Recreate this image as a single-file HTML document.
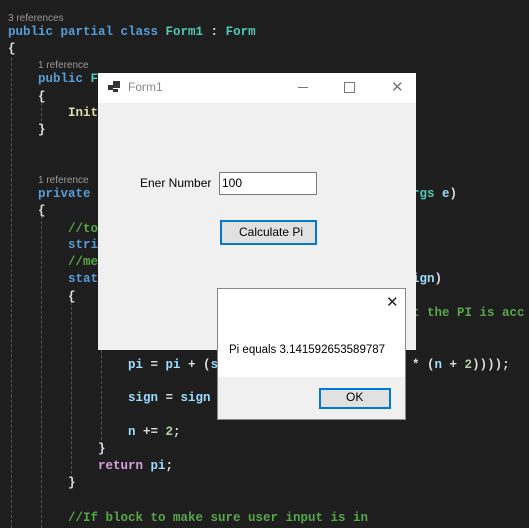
<!DOCTYPE html>
<html><head><style>
body{margin:0;width:529px;height:527px;background:#1e1e1e;position:relative;overflow:hidden;font-family:"Liberation Mono",monospace;}
.l{position:absolute;font-size:12.5px;white-space:pre;line-height:16px;font-weight:bold;color:#9cdcfe}
.c{position:absolute;font-family:"Liberation Sans",sans-serif;font-size:10px;color:#999;white-space:pre}
.k{color:#569cd6}.t{color:#4ec9b0}.g{color:#57a64a}.p{color:#d8a0df}.w{color:#dcdcdc}.m{color:#dcdcaa}.n{color:#b5cea8}
.guide{position:absolute;width:0;border-left:1px dashed #555;}
.s{font-family:"Liberation Sans",sans-serif;font-size:12px;color:#000;position:absolute;white-space:pre}
</style></head><body>
<div class="guide" style="left:11px;top:58px;height:470px"></div>
<div class="guide" style="left:41px;top:92px;height:40px"></div>
<div class="guide" style="left:41px;top:206px;height:322px"></div>
<div class="guide" style="left:71px;top:292px;height:192px"></div>
<div class="guide" style="left:101px;top:340px;height:110px"></div>

<div class="c" style="left:8px;top:13px">3 references</div>
<div class="l" style="left:8px;top:24px"><span class="k">public partial class </span><span class="t">Form1</span><span class="w"> : </span><span class="t">Form</span></div>
<div class="l w" style="left:8px;top:41px">{</div>
<div class="c" style="left:38px;top:60px">1 reference</div>
<div class="l" style="left:38px;top:71px"><span class="k">public </span><span class="t">F</span></div>
<div class="l w" style="left:38px;top:89px">{</div>
<div class="l m" style="left:68px;top:105px">Init</div>
<div class="l w" style="left:38px;top:122px">}</div>
<div class="c" style="left:38px;top:175px">1 reference</div>
<div class="l" style="left:38px;top:186px"><span class="k">private</span></div>
<div class="l" style="left:412px;top:186px"><span class="t">rgs</span> e<span class="w">)</span></div>
<div class="l w" style="left:38px;top:203px">{</div>
<div class="l g" style="left:68px;top:221px">//to</div>
<div class="l k" style="left:68px;top:237px">stri</div>
<div class="l g" style="left:68px;top:254px">//me</div>
<div class="l k" style="left:68px;top:271px">stat</div>
<div class="l" style="left:412px;top:271px">ign<span class="w">)</span></div>
<div class="l w" style="left:68px;top:289px">{</div>
<div class="l g" style="left:412px;top:305px">t the PI is acc</div>
<div class="l" style="left:128px;top:357px">pi <span class="w">=</span> pi <span class="w">+ (</span>s</div>
<div class="l" style="left:412px;top:357px"><span class="w">* (</span>n <span class="w">+ </span><span class="n">2</span><span class="w">))));</span></div>
<div class="l" style="left:128px;top:390px">sign <span class="w">=</span> sign</div>
<div class="l" style="left:128px;top:424px">n <span class="w">+= </span><span class="n">2</span><span class="w">;</span></div>
<div class="l w" style="left:98px;top:441px">}</div>
<div class="l" style="left:98px;top:458px"><span class="p">return</span> pi<span class="w">;</span></div>
<div class="l w" style="left:68px;top:475px">}</div>
<div class="l g" style="left:68px;top:510px">//If block to make sure user input is in</div>

<!-- Form1 -->
<div style="position:absolute;left:98px;top:73px;width:318px;height:277px;background:#f0f0f0;">
 <div style="position:absolute;left:0;top:0;width:318px;height:30px;background:#fff"></div>
 <div style="position:absolute;left:10px;top:12px;width:5px;height:5px;background:#333"></div>
 <div style="position:absolute;left:15px;top:8px;width:7px;height:7px;background:#333"></div>
 <div style="position:absolute;left:15px;top:16px;width:5px;height:3px;background:#333"></div>
 <div class="s" style="left:30px;top:7px;color:#888">Form1</div>
 <div style="position:absolute;left:200px;top:14px;width:10px;height:1px;background:#777"></div>
 <div style="position:absolute;left:246px;top:9px;width:9px;height:9px;border:1px solid #777"></div>
 <div style="position:absolute;left:293px;top:7px;font-family:'DejaVu Sans';font-size:15px;color:#777;line-height:14px">✕</div>
 <div class="s" style="left:42px;top:103px">Ener Number</div>
 <div style="position:absolute;left:121px;top:99px;width:96px;height:21px;background:#fff;border:1px solid #7a7a7a"></div>
 <div class="s" style="left:124px;top:103px">100</div>
 <div style="position:absolute;left:122px;top:147px;width:93px;height:21px;background:#e1e1e1;border:2px solid #0078d7"></div>
 <div class="s" style="left:141px;top:152px">Calculate Pi</div>
</div>

<!-- MessageBox -->
<div style="position:absolute;left:217px;top:288px;width:189px;height:132px;background:#fff;border:1px solid #888;box-sizing:border-box">
 <div style="position:absolute;left:0;bottom:0;width:187px;height:42px;background:#f0f0f0"></div>
 <div style="position:absolute;left:168px;top:6px;font-family:'DejaVu Sans';font-size:15px;color:#222;line-height:14px">✕</div>
 <div class="s" style="left:11px;top:55px;font-size:11.5px">Pi equals 3.141592653589787</div>
 <div style="position:absolute;left:101px;top:99px;width:68px;height:17px;background:#e1e1e1;border:2px solid #0078d7"></div>
 <div class="s" style="left:128px;top:101px">OK</div>
</div>
</body></html>
